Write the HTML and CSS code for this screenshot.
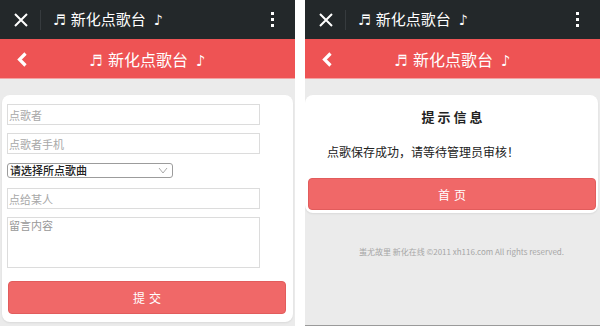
FILE: index.html
```html
<!DOCTYPE html>
<html lang="zh-CN">
<head>
  <meta charset="UTF-8">
  <meta name="viewport" content="width=device-width, initial-scale=1.0">
  <title>新化点歌台</title>
  <link rel="stylesheet" href="styles.css">
</head>
<body>

  <div class="screens">

    <!-- Screen 1: song request form -->
    <div class="phone">
      <div class="topbar">
        <span class="close">
          <svg width="14" height="14" viewBox="0 0 14 14"><path d="M1 1L13 13M13 1L1 13" stroke="#fff" stroke-width="2"/></svg>
        </span>
        <span class="sep"></span>
        <span class="title"><span class="note">♬</span>新化点歌台<span class="note end">♪</span></span>
        <span class="more"><i></i><i></i><i></i></span>
      </div>
      <div class="header">
        <a class="back" href="#">
          <svg width="12" height="15" viewBox="0 0 12 15"><path d="M9.5 1.5L3.5 7.5l6 6" fill="none" stroke="#fff" stroke-width="3.2"/></svg>
        </a>
        <h1><span class="note">♬</span>新化点歌台<span class="note end">♪</span></h1>
        <span></span>
      </div>

      <form class="card form">
        <input class="field" type="text" placeholder="点歌者">
        <input class="field" type="text" placeholder="点歌者手机">
        <div class="select-wrap">
          <select class="select">
            <option>请选择所点歌曲</option>
          </select>
          <svg class="arrow" width="10" height="7" viewBox="0 0 10 7"><path d="M1 1l4 5 4-5" fill="none" stroke="#aaa" stroke-width="1"/></svg>
        </div>
        <input class="field" type="text" placeholder="点给某人">
        <textarea class="field memo" placeholder="留言内容"></textarea>
        <button class="btn" type="button">提交</button>
      </form>
    </div>

    <!-- Screen 2: result message -->
    <div class="phone done">
      <div class="topbar">
        <span class="close">
          <svg width="14" height="14" viewBox="0 0 14 14"><path d="M1 1L13 13M13 1L1 13" stroke="#fff" stroke-width="2"/></svg>
        </span>
        <span class="sep"></span>
        <span class="title"><span class="note">♬</span>新化点歌台<span class="note end">♪</span></span>
        <span class="more"><i></i><i></i><i></i></span>
      </div>
      <div class="header">
        <a class="back" href="#">
          <svg width="12" height="15" viewBox="0 0 12 15"><path d="M9.5 1.5L3.5 7.5l6 6" fill="none" stroke="#fff" stroke-width="3.2"/></svg>
        </a>
        <h1><span class="note">♬</span>新化点歌台<span class="note end">♪</span></h1>
        <span></span>
      </div>

      <div class="card msg">
        <h2>提示信息</h2>
        <p>点歌保存成功，请等待管理员审核！</p>
        <button class="btn" type="button">首页</button>
      </div>

      <p class="footer">蚩尤故里 新化在线 ©2011 xh116.com All rights reserved.</p>
    </div>

  </div>

</body>
</html>
```

FILE: styles.css
```css
body {
  margin: 0;
  background: #fff;
  font-family: 'Noto Sans CJK SC', 'DejaVu Sans', sans-serif;
}

.screens {
  display: flex;
  gap: 10px;
}

.phone {
  width: 295px;
  height: 326px;
  background: #ebebeb;
  display: flex;
  flex-direction: column;
  overflow: hidden;
  box-sizing: border-box;
}

.phone.done {
  border-bottom: 1px solid #9a9a9a;
}

.note {
  font-family: 'DejaVu Sans', sans-serif;
  font-size: 0.95em;
  font-weight: bold;
  margin-right: 5px;
}

.note.end {
  margin: 0 0 0 8px;
}

/* Top app bar */
.topbar {
  height: 39px;
  background: #23282a;
  display: flex;
  align-items: center;
  color: #fff;
}

.close {
  width: 39px;
  display: flex;
  justify-content: center;
  padding-left: 1px;
}

.sep {
  width: 1px;
  height: 20px;
  background: #363b3e;
}

.title {
  margin-left: 12px;
  flex: 1;
  font-size: 15px;
  line-height: 20px;
}

.more {
  width: 46px;
  display: flex;
  flex-direction: column;
  align-items: center;
  gap: 3px;
}

.more i {
  width: 3px;
  height: 3px;
  background: #fff;
}

/* Red page header */
.header {
  height: 39px;
  background: #ee5354;
  border-bottom: 1px solid #f2a3a3;
  display: grid;
  grid-template-columns: 44px 1fr 44px;
  align-items: center;
}

.back {
  display: flex;
  justify-content: center;
  padding-top: 1px;
}

.header h1 {
  margin: 0;
  text-align: center;
  color: #fff;
  font-size: 16px;
  font-weight: normal;
  line-height: 20px;
  padding-top: 2px;
}

/* Card */
.card {
  background: #fff;
  margin: 16px 2px 0;
  border-radius: 8px;
  box-shadow: 0 1px 2px rgba(0, 0, 0, 0.08);
}

.form {
  display: flex;
  flex-direction: column;
  align-items: flex-start;
  padding: 9px 7px 8px 5px;
}

.field {
  width: 253px;
  height: 21px;
  border: 1px solid #dcdcdc;
  padding: 0 1px;
  box-sizing: border-box;
  font-family: inherit;
  font-size: 11px;
  margin: 0 0 8px;
  outline: none;
}

.field::placeholder {
  color: #a8a8a8;
}

.select-wrap {
  position: relative;
  margin: 1px 0 10px;
}

.select {
  width: 166px;
  height: 15px;
  border: 1px solid #9c9c9c;
  border-radius: 3px;
  background: #fff;
  padding: 0 2px;
  font-family: inherit;
  font-size: 11px;
  font-weight: 500;
  line-height: 13px;
  color: #222;
  appearance: none;
  display: block;
}

.arrow {
  position: absolute;
  right: 5px;
  top: 4px;
}

.memo {
  height: 51px;
  resize: none;
  padding-top: 0;
  line-height: 14px;
  margin-bottom: 13px;
}

.memo::placeholder {
  color: #999;
}

.btn {
  width: 278px;
  height: 33px;
  margin-left: 1px;
  background: #f06868;
  border: 1px solid #e25c5c;
  border-radius: 4px;
  color: #fff;
  font-family: inherit;
  font-size: 12px;
  letter-spacing: 4px;
  text-indent: 4px;
  cursor: pointer;
}

/* Message card */
.msg {
  margin: 16px 2px 0 0;
  padding: 12px 2px 3px 3px;
  text-align: center;
}

.msg h2 {
  margin: 0;
  font-size: 13px;
  line-height: 20px;
  letter-spacing: 3px;
  text-indent: 3px;
  color: #222;
}

.msg p {
  margin: 17px 0 18px;
  padding-left: 19px;
  text-align: left;
  font-size: 12px;
  line-height: 16px;
  color: #222;
}

.msg .btn {
  width: 100%;
  height: 32px;
  margin: 0;
}

.footer {
  margin: 34px 0 0;
  text-align: center;
  font-size: 8px;
  line-height: 10px;
  color: #a6a6a6;
  padding-left: 18px;
}
```
